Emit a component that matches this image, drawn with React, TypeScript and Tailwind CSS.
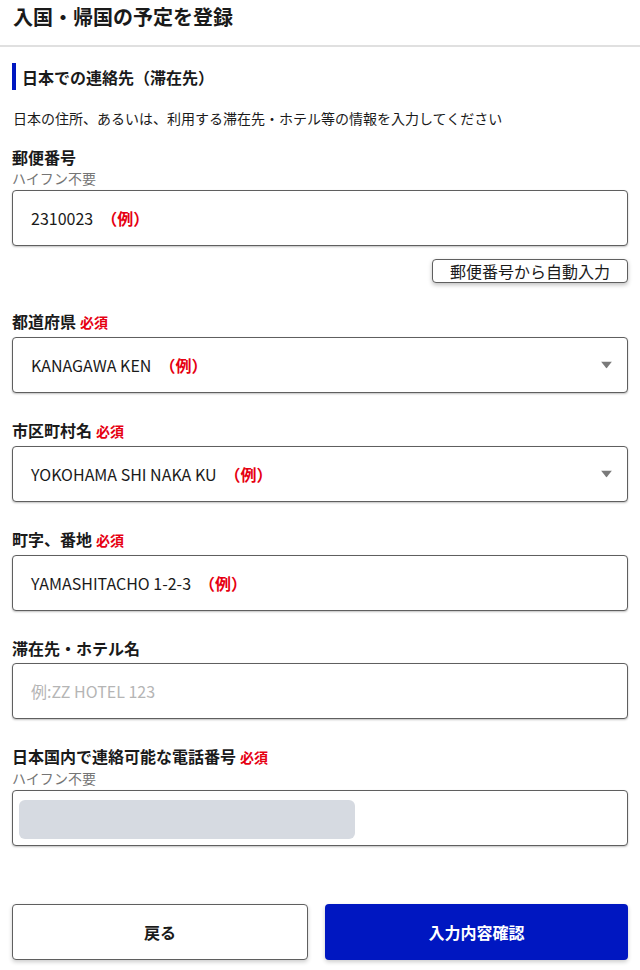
import React from 'react';

const font = { fontFamily: '"Noto Sans CJK JP", "Noto Sans", sans-serif' };

const Required = () => (
    <span className="ml-1 text-[14px] font-bold text-[#e60012]">必須</span>
);

const Example = () => (
    <span className="ml-2 font-bold text-[#e60012]">（例）</span>
);

interface FieldProps {
    label: string;
    required?: boolean;
    hint?: string;
    children: React.ReactNode;
}

const Field = ({ label, required, hint, children }: FieldProps) => (
    <div>
        <div className="text-[16px] font-bold leading-[22px] text-[#1a1a1a]">
            {label}
            {required && <Required />}
        </div>
        {hint && <div className="text-[14px] leading-[20px] text-[#757575]">{hint}</div>}
        <div className={hint ? 'mt-[2px]' : 'mt-[4px]'}>{children}</div>
    </div>
);

const Box = ({ children, select }: { children?: React.ReactNode; select?: boolean }) => (
    <div className="relative flex h-[56px] items-center rounded-[4px] border border-[#5f5f5f] bg-white pl-[18px] text-[16px] text-[#1a1a1a] shadow-[0_1px_2px_rgba(0,0,0,0.25)]">
        {children}
        {select && (
            <svg className="absolute right-[15px] top-1/2 -translate-y-1/2" width="11" height="7" viewBox="0 0 11 7">
                <path d="M0 0 L11 0 L5.5 7 Z" fill="#7a7a7a" />
            </svg>
        )}
    </div>
);

export default function App() {
    return (
        <div className="min-h-[970px] w-[640px] bg-white text-[#1a1a1a]" style={font}>
            {/* header */}
            <div className="h-[47px] border-b-2 border-[#e0e0e0] pl-[13px] pt-[3px]">
                <h1 className="text-[20px] font-bold leading-[28px]">入国・帰国の予定を登録</h1>
            </div>

            <div className="px-[12px]">
                <div className="mt-[16px] flex h-[27px] items-center border-l-[4px] border-[#0017c1] pl-[6px]">
                    <h2 className="text-[16px] font-bold leading-[22px]">日本での連絡先（滞在先）</h2>
                </div>
                <p className="mt-[18px] pl-[1px] text-[14px] leading-[20px]">
                    日本の住所、あるいは、利用する滞在先・ホテル等の情報を入力してください
                </p>

                <div className="mt-[18px] flex flex-col">
                    <Field label="郵便番号" hint="ハイフン不要">
                        <Box>
                            2310023
                            <Example />
                        </Box>
                    </Field>
                    <div className="mt-[13px] flex justify-end">
                        <button className="h-[24px] w-[196px] rounded-[4px] border border-[#5f5f5f] bg-white text-[16px] leading-[22px] shadow-[0_2px_4px_rgba(0,0,0,0.25)]">
                            郵便番号から自動入力
                        </button>
                    </div>
                </div>

                <div className="mt-[27px] flex flex-col gap-[26px]">
                    <Field label="都道府県" required>
                        <Box select>
                            KANAGAWA KEN
                            <Example />
                        </Box>
                    </Field>
                    <Field label="市区町村名" required>
                        <Box select>
                            YOKOHAMA SHI NAKA KU
                            <Example />
                        </Box>
                    </Field>
                    <Field label="町字、番地" required>
                        <Box>
                            YAMASHITACHO 1-2-3
                            <Example />
                        </Box>
                    </Field>
                    <Field label="滞在先・ホテル名">
                        <Box>
                            <span className="text-[#b5b5b5]">例:ZZ HOTEL 123</span>
                        </Box>
                    </Field>
                    <Field label="日本国内で連絡可能な電話番号" required hint="ハイフン不要">
                        <div className="h-[56px] rounded-[4px] border border-[#5f5f5f] bg-white pl-[6px] pt-[9px] shadow-[0_1px_2px_rgba(0,0,0,0.25)]">
                            <div className="h-[39px] w-[336px] rounded-[6px] bg-[#d6dae1]" />
                        </div>
                    </Field>
                </div>

                <div className="mt-[58px] grid grid-cols-[296px_1fr] gap-[17px]">
                    <button className="h-[56px] rounded-[4px] border border-[#5f5f5f] bg-white text-[16px] font-bold shadow-[0_2px_4px_rgba(0,0,0,0.2)]">
                        戻る
                    </button>
                    <button className="h-[56px] rounded-[4px] bg-[#0017c1] text-[16px] font-bold text-white shadow-[0_2px_4px_rgba(0,0,0,0.2)]">
                        入力内容確認
                    </button>
                </div>
            </div>
        </div>
    );
}
